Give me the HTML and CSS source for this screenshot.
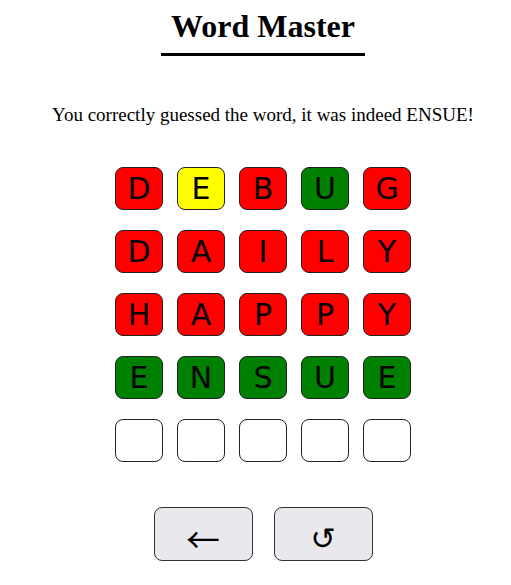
FILE: index.html
```html
<!DOCTYPE html>
<html>
<head>
<meta charset="utf-8">
<link rel="stylesheet" href="styles.css">
</head>
<body>
<div class="app">
  <h1 class="title">Word Master</h1>
  <p class="message">You correctly guessed the word, it was indeed ENSUE!</p>
  <div class="board">
    <div class="row">
      <div class="tile red">D</div><div class="tile yellow">E</div><div class="tile red">B</div><div class="tile green">U</div><div class="tile red">G</div>
    </div>
    <div class="row">
      <div class="tile red">D</div><div class="tile red">A</div><div class="tile red">I</div><div class="tile red">L</div><div class="tile red">Y</div>
    </div>
    <div class="row">
      <div class="tile red">H</div><div class="tile red">A</div><div class="tile red">P</div><div class="tile red">P</div><div class="tile red">Y</div>
    </div>
    <div class="row">
      <div class="tile green">E</div><div class="tile green">N</div><div class="tile green">S</div><div class="tile green">U</div><div class="tile green">E</div>
    </div>
    <div class="row">
      <div class="tile"></div><div class="tile"></div><div class="tile"></div><div class="tile"></div><div class="tile"></div>
    </div>
  </div>
  <div class="controls">
    <button class="btn"><span class="arrow">&larr;</span></button>
    <button class="btn"><span class="undo">&#8634;</span></button>
  </div>
</div>
</body>
</html>
```

FILE: styles.css
```css
html, body {
  margin: 0;
  padding: 0;
  background: #fff;
}
body {
  font-family: "Liberation Serif", "Times New Roman", serif;
  color: #000;
}
.app {
  display: flex;
  flex-direction: column;
  align-items: center;
  padding-left: 15px;
}
.title {
  font-size: 32px;
  font-weight: bold;
  margin: 8px 0 0;
  padding: 0 10px 8px;
  border-bottom: 3px solid #000;
  line-height: 37px;
}
.message {
  font-size: 19px;
  margin: 48px 0 0;
  line-height: 22px;
}
.board {
  display: flex;
  flex-direction: column;
  gap: 20px;
  margin-top: 41px;
}
.row {
  display: flex;
  gap: 14px;
}
.tile {
  width: 46px;
  height: 41px;
  border: 1px solid #222;
  border-radius: 8px;
  display: flex;
  align-items: center;
  justify-content: center;
  font-family: "DejaVu Sans", sans-serif;
  font-size: 30px;
  background: #fff;
}
.red { background: #ff0000; }
.yellow { background: #ffff00; }
.green { background: #008000; }
.controls {
  display: flex;
  gap: 21px;
  margin-top: 45px;
}
.btn {
  width: 99px;
  height: 54px;
  border: 1px solid #333;
  border-radius: 8px;
  background: #e9e9ed;
  color: #000;
  padding: 0;
  display: flex;
  align-items: center;
  justify-content: center;
}
.arrow {
  font-family: "Noto Sans CJK SC", "DejaVu Sans", sans-serif;
  font-size: 34px;
  line-height: 1;
  margin-top: 10px;
}
.undo {
  font-family: "DejaVu Sans", sans-serif;
  font-size: 30px;
  line-height: 1;
  margin-top: 9px;
}
```
